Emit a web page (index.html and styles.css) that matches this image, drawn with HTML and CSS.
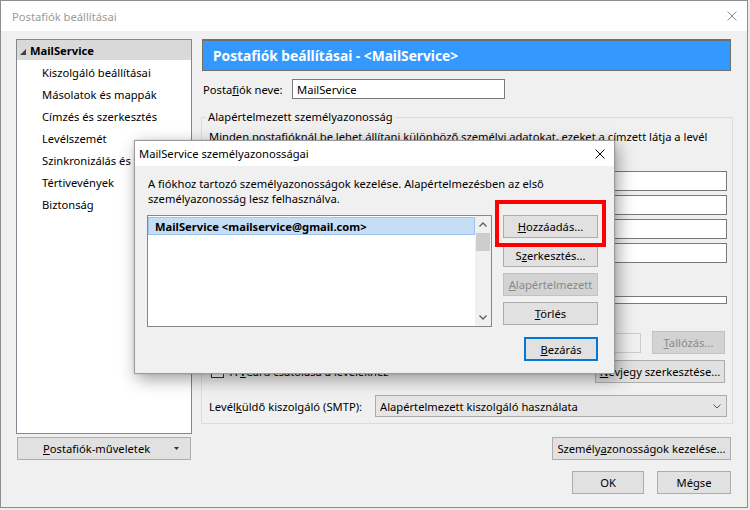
FILE: index.html
```html
<!DOCTYPE html>
<html lang="hu">
<head>
<meta charset="utf-8">
<title>Postafiók beállításai</title>
<link rel="stylesheet" href="styles.css">
</head>
<body>
<div class="window">
  <div class="titlebar">
    <span class="title">Postafiók beállításai</span>
    <svg class="close-main" width="10" height="10" viewBox="0 0 10 10"><path d="M0.5 0.5L9.5 9.5M9.5 0.5L0.5 9.5"/></svg>
  </div>
  <div class="content">
    <div class="left">
      <div class="tree">
        <div class="node root">
          <svg class="expander" width="6" height="6" viewBox="0 0 6 6"><polygon points="6,0 6,6 0,6"/></svg>
          <span class="root-label">MailService</span>
        </div>
        <div class="node">Kiszolgáló beállításai</div>
        <div class="node">Másolatok és mappák</div>
        <div class="node">Címzés és szerkesztés</div>
        <div class="node">Levélszemét</div>
        <div class="node">Szinkronizálás és tárolás</div>
        <div class="node">Tértivevények</div>
        <div class="node">Biztonság</div>
      </div>
      <button class="btn btn-actions"><span><u>P</u>ostafiók-műveletek</span><svg class="drop" width="5" height="3" viewBox="0 0 5 3"><polygon points="0,0 5,0 2.5,3"/></svg></button>
    </div>
    <div class="right">
      <div class="banner">Postafiók beállításai - &lt;MailService&gt;</div>
      <div class="name-row">
        <span class="name-label">Posta<u>f</u>iók neve:</span>
        <div class="textbox name-box">MailService</div>
      </div>
      <fieldset class="group">
        <legend>Alapértelmezett személyazonosság</legend>
        <p class="intro">Minden postafióknál be lehet állítani különböző személyi adatokat, ezeket a címzett látja a levél</p>
        <div class="fields">
          <div class="textbox field"></div>
          <div class="textbox field"></div>
          <div class="textbox field"></div>
          <div class="textbox field"></div>
        </div>
        <div class="textbox sig"></div>
        <div class="file-row">
          <div class="textbox textbox-disabled file"></div>
          <button class="btn btn-disabled browse"><span><u>T</u>allózás...</span></button>
        </div>
        <div class="vcard-row">
          <label class="check"><span class="box"></span><span>A <u>v</u>Card csatolása a levelekhez</span></label>
          <button class="btn vcard-btn"><span><u>N</u>évjegy szerkesztése...</span></button>
        </div>
        <div class="smtp-row">
          <span>Levél<u>k</u>üldő kiszolgáló (SMTP):</span>
          <div class="select"><span>Alapértelmezett kiszolgáló használata</span><svg class="chev" width="8" height="5" viewBox="0 0 8 5"><polyline points="0.5,0.5 4,4 7.5,0.5"/></svg></div>
        </div>
      </fieldset>
      <div class="manage-row">
        <button class="btn manage"><span>Személy<u>a</u>zonosságok kezelése...</span></button>
      </div>
      <div class="ok-row">
        <button class="btn ok">OK</button>
        <button class="btn cancel">Mégse</button>
      </div>
    </div>
  </div>

  <div class="dialog">
    <div class="dlg-title">
      <span>MailService személyazonosságai</span>
      <svg class="close-dlg" width="10" height="10" viewBox="0 0 10 10"><path d="M0.5 0.5L9.5 9.5M9.5 0.5L0.5 9.5"/></svg>
    </div>
    <div class="dlg-body">
      <p class="dlg-text">A fiókhoz tartozó személyazonosságok kezelése. Alapértelmezésben az első<br>személyazonosság lesz felhasználva.</p>
      <div class="dlg-main">
        <div class="list">
          <div class="list-items">
            <div class="list-item selected">MailService &lt;mailservice@gmail.com&gt;</div>
          </div>
          <div class="scrollbar">
            <div class="sb-arrow"><svg width="8" height="5" viewBox="0 0 8 5"><polyline points="0.5,4.5 4,1 7.5,4.5"/></svg></div>
            <div class="sb-thumb"></div>
            <div class="sb-track"></div>
            <div class="sb-arrow"><svg width="8" height="5" viewBox="0 0 8 5"><polyline points="0.5,0.5 4,4 7.5,0.5"/></svg></div>
          </div>
        </div>
        <div class="dlg-buttons">
          <button class="btn"><span><u>H</u>ozzáadás...</span></button>
          <button class="btn"><span>S<u>z</u>erkesztés...</span></button>
          <button class="btn btn-disabled"><span><u>A</u>lapértelmezett</span></button>
          <button class="btn"><span><u>T</u>örlés</span></button>
        </div>
      </div>
      <div class="dlg-footer">
        <button class="btn btn-default"><span><u>B</u>ezárás</span></button>
      </div>
    </div>
    <div class="highlight"></div>
  </div>
</div>
</body>
</html>
```

FILE: styles.css
```css
* { box-sizing: border-box; }
html, body { margin: 0; padding: 0; }
body {
  width: 750px;
  height: 510px;
  overflow: hidden;
  background: #ebebeb;
  font-family: "Noto Sans", "Segoe UI", sans-serif;
  font-size: 11.2px;
  color: #000;
}
u { text-decoration: underline; text-underline-offset: 1px; }

.window {
  position: relative;
  width: 748px;
  height: 508px;
  border: 1px solid #8e8e8e;
  background: #f0f0f0;
}
.titlebar {
  height: 30px;
  background: #fff;
  display: flex;
  align-items: center;
  justify-content: space-between;
  padding: 0 10px 0 11px;
}
.title { color: #9a9a9a; }
.close-main { stroke: #8a8a8a; stroke-width: 1; fill: none; }

.content {
  display: flex;
  gap: 9px;
  padding: 8px 0 0 15px;
}
.left { width: 176px; display: flex; flex-direction: column; }
.tree {
  height: 395px;
  border: 1px solid #828790;
  background: #fff;
}
.node {
  height: 22px;
  display: flex;
  align-items: center;
  padding-left: 25px;
  white-space: nowrap;
}
.node.root {
  height: 20px;
  margin-bottom: 1px;
  padding-left: 3px;
  background: #d9d9d9;
  font-weight: bold;
}
.expander { fill: #404040; margin-right: 4px; margin-top: 3px; }

.btn {
  font: inherit;
  color: #000;
  height: 23px;
  padding: 0;
  background: #e1e1e1;
  border: 1px solid #adadad;
  display: flex;
  align-items: center;
  justify-content: center;
  white-space: nowrap;
}
.btn-disabled { background: #d3d3d3; border-color: #c2c2c2; color: #8a8a8a; }
.btn-default { border: 2px solid #0078d7; }

.btn-actions {
  margin-top: 3px;
  margin-left: 1px;
  width: 174px;
  justify-content: space-between;
  padding: 0 11px 0 25px;
}
.drop { fill: #333; }

.right { width: 532px; display: flex; flex-direction: column; padding-right: 2px; }
.banner {
  height: 32px;
  margin: 0 0 0 1px;
  background: #3399ff;
  border: 1px solid #6f6f6f;
  border-top-width: 2px;
  color: #fff;
  font-weight: bold;
  font-size: 13.75px;
  display: flex;
  align-items: center;
  padding-left: 10px;
}
.name-row {
  margin-top: 8px;
  height: 20px;
  display: flex;
  align-items: center;
  padding-left: 2px;
}
.name-label { width: 89px; }
.textbox {
  height: 20px;
  background: #fff;
  border: 1px solid #7a7a7a;
}
.name-box { width: 213px; padding-left: 4px; display: flex; align-items: center; }

.group {
  margin: 10px -2px 0 0;
  padding: 0 5px 6px 4px;
  border: 1px solid #dcdcdc;
  min-width: 0;
}
.group legend { padding: 0 2px; line-height: 16px; }
.intro {
  margin: 4px 0 0 3px;
  line-height: 16px;
  white-space: nowrap;
  overflow: hidden;
}
.fields {
  display: flex;
  flex-direction: column;
  gap: 4px;
  margin: 26px 0 0 100px;
}
.sig { height: 8px; margin: 33px 0 0 100px; }
.file-row {
  margin: 27px 2px 0 100px;
  height: 23px;
  display: flex;
  align-items: center;
  gap: 11px;
}
.file { flex: 1; }
.textbox-disabled { background: #f0f0f0; border-color: #cccccc; }
.browse { width: 73px; }
.vcard-row {
  margin-top: 6px;
  height: 23px;
  display: flex;
  align-items: center;
  justify-content: space-between;
  padding: 0 2px 0 5px;
}
.check { display: flex; align-items: center; gap: 6px; }
.box { width: 13px; height: 13px; border: 1px solid #333; background: #fff; }
.vcard-btn { width: 130px; }
.smtp-row {
  margin-top: 12px;
  height: 22px;
  display: flex;
  align-items: center;
  justify-content: space-between;
  padding-left: 3px;
}
.select {
  width: 352px;
  height: 22px;
  background: #e5e5e5;
  border: 1px solid #acacac;
  display: flex;
  align-items: center;
  justify-content: space-between;
  padding: 0 5px 0 4px;
}
.chev { stroke: #555; stroke-width: 1; fill: none; }

.manage-row { margin-top: 13px; display: flex; justify-content: flex-end; }
.manage { width: 179px; }
.ok-row { margin-top: 11px; display: flex; justify-content: flex-end; gap: 13px; }
.ok { width: 72px; }
.cancel { width: 74px; }

/* dialog */
.dialog {
  position: absolute;
  left: 133px;
  top: 139px;
  width: 481px;
  height: 234px;
  background: #f0f0f0;
  border: 1px solid #9a9a9a;
  box-shadow: 0 0 2px rgba(0,0,0,0.15), 3px 5px 16px rgba(0,0,0,0.38);
}
.dlg-title {
  height: 25px;
  background: #fff;
  display: flex;
  align-items: center;
  justify-content: space-between;
  padding: 0 9px 0 4px;
}
.close-dlg { stroke: #000; stroke-width: 1; fill: none; }
.dlg-body { padding: 10px 16px 0 12px; }
.dlg-text { margin: 0; padding-left: 1px; line-height: 15px; }
.dlg-main { display: flex; margin-top: 9px; }
.list {
  width: 345px;
  height: 112px;
  border: 1px solid #828790;
  background: #fff;
  display: flex;
}
.list-items { flex: 1; padding-top: 1px; }
.list-item {
  height: 18px;
  display: flex;
  align-items: center;
  padding-left: 6px;
  white-space: nowrap;
}
.list-item.selected {
  background: #c6ddf6;
  border: 1px solid #9fc4ec;
  font-weight: bold;
}
.scrollbar {
  width: 16px;
  background: #f0f0f0;
  display: flex;
  flex-direction: column;
  align-items: center;
}
.sb-arrow {
  height: 17px;
  width: 16px;
  display: flex;
  align-items: center;
  justify-content: center;
}
.sb-arrow svg { stroke: #606060; stroke-width: 1.4; fill: none; }
.sb-thumb { width: 14px; height: 18px; background: #cdcdcd; }
.sb-track { flex: 1; }
.dlg-buttons {
  margin-left: 11px;
  width: 95px;
  display: flex;
  flex-direction: column;
  gap: 6px;
}
.dlg-footer { display: flex; justify-content: flex-end; margin-top: 10px; }
.btn-default { width: 74px; height: 24px; }
.highlight {
  position: absolute;
  left: 360px;
  top: 59px;
  width: 111px;
  height: 47px;
  border: 4px solid #ff0000;
}
```
